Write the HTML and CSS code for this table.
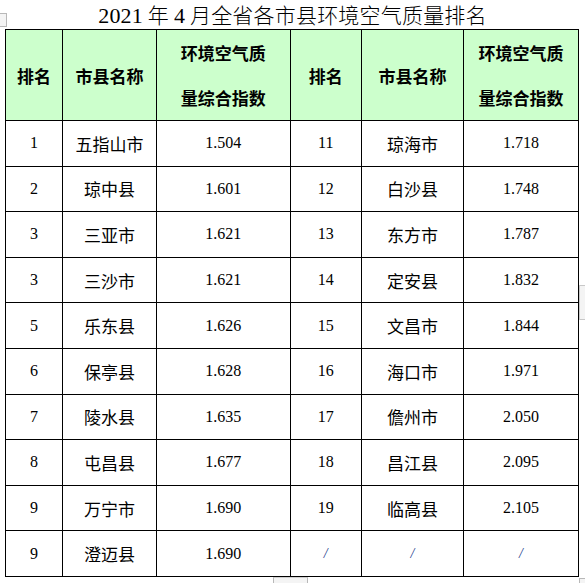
FILE: index.html
```html
<!DOCTYPE html>
<html lang="zh-CN">
<head>
<meta charset="utf-8">
<title>2021年4月全省各市县环境空气质量排名</title>
<link rel="stylesheet" href="styles.css">
</head>
<body>
<div class="page">
  <div class="title"><span class="num">2021</span> 年 <span class="num">4</span> 月全省各市县环境空气质量排名</div>
  <table class="rank">
    <colgroup>
      <col class="c1"><col class="c2"><col class="c3"><col class="c4"><col class="c5"><col class="c6">
    </colgroup>
    <thead>
      <tr class="head">
        <th>排名</th><th>市县名称</th><th>环境空气质<br>量综合指数</th>
        <th>排名</th><th>市县名称</th><th>环境空气质<br>量综合指数</th>
      </tr>
    </thead>
    <tbody>
      <tr><td class="n">1</td><td class="z">五指山市</td><td class="n">1.504</td><td class="n">11</td><td class="z">琼海市</td><td class="n">1.718</td></tr>
      <tr><td class="n">2</td><td class="z">琼中县</td><td class="n">1.601</td><td class="n">12</td><td class="z">白沙县</td><td class="n">1.748</td></tr>
      <tr><td class="n">3</td><td class="z">三亚市</td><td class="n">1.621</td><td class="n">13</td><td class="z">东方市</td><td class="n">1.787</td></tr>
      <tr><td class="n">3</td><td class="z">三沙市</td><td class="n">1.621</td><td class="n">14</td><td class="z">定安县</td><td class="n">1.832</td></tr>
      <tr><td class="n">5</td><td class="z">乐东县</td><td class="n">1.626</td><td class="n">15</td><td class="z">文昌市</td><td class="n">1.844</td></tr>
      <tr><td class="n">6</td><td class="z">保亭县</td><td class="n">1.628</td><td class="n">16</td><td class="z">海口市</td><td class="n">1.971</td></tr>
      <tr><td class="n">7</td><td class="z">陵水县</td><td class="n">1.635</td><td class="n">17</td><td class="z">儋州市</td><td class="n">2.050</td></tr>
      <tr><td class="n">8</td><td class="z">屯昌县</td><td class="n">1.677</td><td class="n">18</td><td class="z">昌江县</td><td class="n">2.095</td></tr>
      <tr><td class="n">9</td><td class="z">万宁市</td><td class="n">1.690</td><td class="n">19</td><td class="z">临高县</td><td class="n">2.105</td></tr>
      <tr><td class="n">9</td><td class="z">澄迈县</td><td class="n">1.690</td><td class="n sl">/</td><td class="n sl">/</td><td class="n sl">/</td></tr>
    </tbody>
  </table>
  <div class="handle handle-tl"></div>
  <div class="handle handle-bc"></div>
  <div class="handle handle-br"></div>
  <div class="handle handle-r"></div>
</div>
</body>
</html>
```
FILE: styles.css
```css
html, body {
  margin: 0;
  padding: 0;
  background: #ffffff;
}
.page {
  position: relative;
  width: 585px;
  height: 583px;
  overflow: hidden;
}
.title {
  height: 29px;
  line-height: 29px;
  text-align: center;
  font-family: "Noto Sans CJK SC", "Liberation Serif", serif;
  font-weight: 300;
  font-size: 21px;
  color: #000;
  letter-spacing: 0.2px;
}
.title .num {
  font-family: "Liberation Serif", serif;
  font-size: 22px;
  font-weight: 400;
}
.rank {
  margin-left: 5px;
  width: 573px;
  table-layout: fixed;
  border-collapse: collapse;
  color: #000;
}
.c1 { width: 57px; }
.c2 { width: 94px; }
.c3 { width: 133.5px; }
.c4 { width: 71.5px; }
.c5 { width: 102px; }
.c6 { width: 115px; }
.rank th, .rank td {
  border: 1px solid #000;
  padding: 0;
  text-align: center;
  vertical-align: middle;
}
.head {
  height: 90px;
}
.head th {
  background: #ccffcc;
  font-family: "Noto Sans CJK SC", sans-serif;
  font-weight: 700;
  font-size: 17px;
  line-height: 45px;
}
.rank tbody tr {
  height: 45.6px;
}
.rank td.n {
  font-family: "Liberation Serif", serif;
  font-size: 16px;
}
.rank td.z {
  font-family: "Noto Sans CJK SC", sans-serif;
  font-size: 17px;
  font-weight: 400;
}
.rank td.sl {
  font-style: italic;
  font-size: 14px;
  color: #1a3a8a;
}
.handle {
  position: absolute;
  border: 1px solid #b8b8b8;
  background: #f4f4f4;
}
.handle-tl {
  left: -1px;
  top: 13px;
  width: 6px;
  height: 12px;
}
.handle-bc {
  left: 273px;
  top: 577px;
  width: 33px;
  height: 10px;
  border-top-color: #d0d0d0;
}
.handle-br {
  left: 579px;
  top: 578px;
  width: 7px;
  height: 7px;
}
.handle-r {
  left: 579px;
  top: 285px;
  width: 8px;
  height: 33px;
  border-color: #c8c8c8;
}
```
